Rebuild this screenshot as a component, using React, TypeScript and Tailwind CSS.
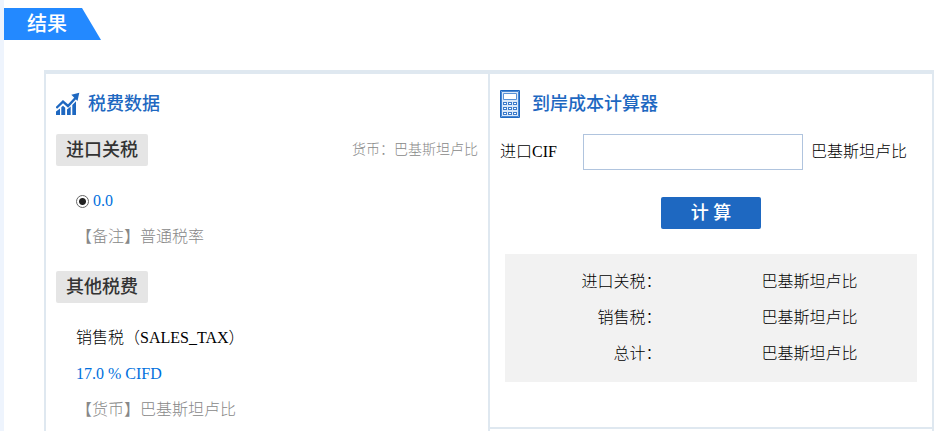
import { useState } from 'react';

const CURRENCY = '巴基斯坦卢比';

const results = ['进口关税', '销售税', '总计'];

const ChartIcon = () => (
  <svg className="h-7 w-6" viewBox="0 0 24 28" fill="#1e68c1" aria-hidden="true">
    <path d="M0 21.5 4 18.5V25H0zM5.3 17.3 7 15.8l2.2 2V25H5.3zM11 19.5l3.7-3V25H11zM16.3 15 20 11.2V25h-3.7z" />
    <path
      d="M.3 18 7 11.6l5 4.4 7.5-8"
      fill="none"
      stroke="#1e68c1"
      strokeWidth="2.4"
    />
    <path d="m15.3 4.8 8-2-1.8 8.2z" />
  </svg>
);

const CalculatorIcon = () => (
  <svg className="h-7 w-6" viewBox="0 0 24 28" fill="none" aria-hidden="true">
    <path d="M.5.5h19v27H.5z" fill="#dbe9f9" stroke="#1e68c1" />
    <path d="M1.5 1.5h17v25h-17z" stroke="#4a87d2" />
    <path d="M3.5 3.5h13v6h-13z" fill="#fff" stroke="#5a92d6" />
    {[12, 17, 22].map(y =>
      [3, 8, 13].map(x => (
        <rect
          key={`${x}-${y}`}
          x={x + 0.5}
          y={y + 0.5}
          width="3"
          height="2"
          fill="#fff"
          stroke="#3c7bcb"
        />
      ))
    )}
  </svg>
);

const Badge = ({ title }: { title: string }) => (
  <h3 className="rounded-xs bg-[#e5e5e5] px-2.5 text-lg leading-8 font-medium text-[#333]">
    {title}
  </h3>
);

const App = () => {
  const [cif, setCif] = useState('');

  return (
    <div className="flex min-h-screen flex-col border-l-4 border-[#eef4fd] bg-white pt-2 pr-[3px] font-['Liberation_Serif','Noto_Sans_CJK_SC',serif] text-base text-black">
      <h1 className="self-start bg-[#2389ff] pr-[34px] pl-[23px] text-xl leading-8 font-medium text-white [clip-path:polygon(0_0,calc(100%-19px)_0,100%_100%,0_100%)]">
        结果
      </h1>

      <main className="mt-[30px] ml-10 grid flex-1 grid-cols-[1fr_2px_1fr] border-x-2 border-t-4 border-[#dfe8f0]">
        <section className="px-2.5 pt-4">
          <h2 className="flex items-center gap-2 text-lg leading-7 font-medium text-[#1e68c1]">
            <ChartIcon />
            税费数据
          </h2>

          <div className="mt-4 flex items-center justify-between">
            <Badge title="进口关税" />
            <p className="text-sm font-light text-[#888]">货币：{CURRENCY}</p>
          </div>

          <div className="mt-[17px] pl-5 leading-9">
            <label className="flex items-center gap-1 text-[#0070dd]">
              <input
                type="radio"
                name="rate"
                defaultChecked
                className="size-[13px] appearance-none rounded-full border border-[#666] bg-white checked:bg-[radial-gradient(circle,#222_3px,#fff_4px)]"
              />
              0.0
            </label>
            <p className="font-light text-[#888]">【备注】普通税率</p>
          </div>

          <div className="mt-4 flex">
            <Badge title="其他税费" />
          </div>

          <div className="mt-[17px] pl-5 leading-9">
            <p className="font-light">销售税（SALES_TAX）</p>
            <p className="text-[#0070dd]">17.0 % CIFD</p>
            <p className="font-light text-[#888]">【货币】{CURRENCY}</p>
          </div>
        </section>

        <div className="bg-[#dfe8f0]" />

        <section>
          <div className="border-b-2 border-[#dfe8f0] px-2.5 pt-4 pb-[45px]">
            <h2 className="flex items-center gap-2 text-lg leading-7 font-medium text-[#1e68c1]">
              <CalculatorIcon />
              到岸成本计算器
            </h2>

            <form onSubmit={event => event.preventDefault()}>
              <div className="mt-4 flex items-center font-light">
                <label htmlFor="cif" className="w-[83px]">
                  进口CIF
                </label>
                <input
                  id="cif"
                  type="text"
                  value={cif}
                  onChange={event => setCif(event.target.value)}
                  className="h-9 w-[220px] border border-[#b0c4de] bg-white px-2"
                />
                <span className="ml-2">{CURRENCY}</span>
              </div>

              <button
                type="submit"
                className="mx-auto mt-[27px] block w-[100px] rounded-xs bg-[#1e68c1] text-lg leading-8 font-medium text-white"
              >
                计 算
              </button>
            </form>

            <div className="mx-[5px] mt-[25px] bg-[#f2f2f2] py-2.5">
              <table className="w-full table-fixed font-light">
                <tbody>
                  {results.map(name => (
                    <tr key={name} className="h-9">
                      <th scope="row" className="w-[38%] text-right font-light">
                        {name}：
                      </th>
                      <td className="pl-[100px]">{CURRENCY}</td>
                    </tr>
                  ))}
                </tbody>
              </table>
            </div>
          </div>
        </section>
      </main>
    </div>
  );
};

export default App;
